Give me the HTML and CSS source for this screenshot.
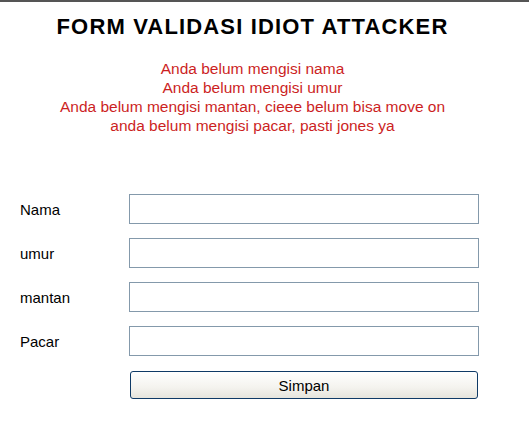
FILE: index.html
```html
<!DOCTYPE html>
<html lang="id">
<head>
<meta charset="utf-8">
<title>Form Validasi Idiot Attacker</title>
<link rel="stylesheet" href="styles.css">
</head>
<body>
<div class="page">
  <h1 class="title">FORM VALIDASI IDIOT ATTACKER</h1>
  <div class="errors">
    <div>Anda belum mengisi nama</div>
    <div>Anda belum mengisi umur</div>
    <div>Anda belum mengisi mantan, cieee belum bisa move on</div>
    <div>anda belum mengisi pacar, pasti jones ya</div>
  </div>
  <form class="form">
    <label class="label" for="nama">Nama</label>
    <input class="field" type="text" id="nama" name="nama">
    <label class="label" for="umur">umur</label>
    <input class="field" type="text" id="umur" name="umur">
    <label class="label" for="mantan">mantan</label>
    <input class="field" type="text" id="mantan" name="mantan">
    <label class="label" for="pacar">Pacar</label>
    <input class="field" type="text" id="pacar" name="pacar">
    <button class="btn" type="button">Simpan</button>
  </form>
</div>
</body>
</html>
```
FILE: styles.css
```css
html, body {
  margin: 0;
  padding: 0;
  background: #ffffff;
}
body {
  border-top: 2px solid #555555;
  font-family: "Liberation Sans", Arial, sans-serif;
  color: #000000;
}
.page {
  width: 505px;
  text-align: center;
}
.title {
  margin: 12px 0 0;
  font-size: 22px;
  line-height: 26px;
  font-weight: bold;
  letter-spacing: 1.15px;
}
.errors {
  margin-top: 19px;
  font-size: 15.5px;
  line-height: 19px;
  color: #cc1f1f;
}
.form {
  margin-top: 59px;
  padding-left: 20px;
  display: grid;
  grid-template-columns: 109px 350px;
  row-gap: 14px;
  text-align: left;
}
.label {
  font-size: 15px;
  align-self: center;
}
.field {
  box-sizing: border-box;
  width: 350px;
  height: 30px;
  margin: 0;
  border: 1px solid #8499ab;
  background: #ffffff;
  padding: 0 4px;
  font-family: "Liberation Sans", Arial, sans-serif;
  font-size: 15px;
}
.btn {
  grid-column: 2;
  box-sizing: border-box;
  width: 348px;
  height: 28px;
  margin: 1px 0 0 1px;
  border: 1px solid #0f3a66;
  border-radius: 3px;
  background: linear-gradient(#ffffff, #f4f3ee 60%, #e6e4dc);
  font-family: "Liberation Sans", Arial, sans-serif;
  font-size: 15px;
  color: #000000;
  padding: 0;
}
```
